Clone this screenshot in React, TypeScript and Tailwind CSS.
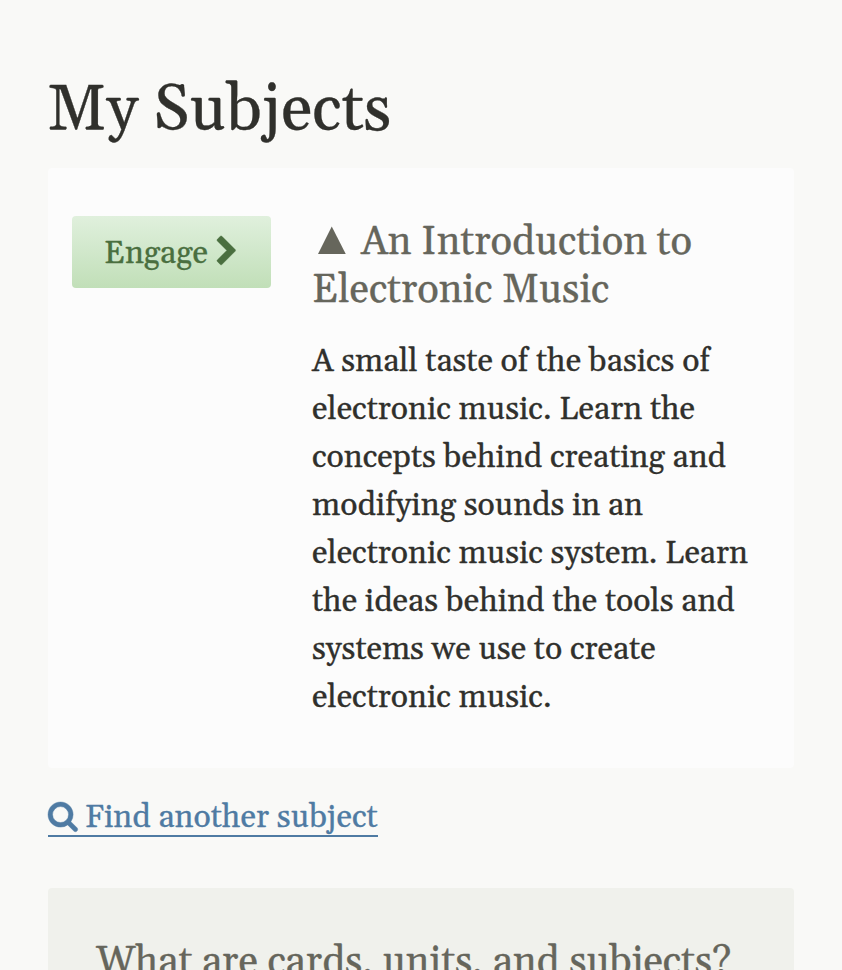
function ChevronIcon() {
  return (
    <svg viewBox="346 26 1036 1612" className="mt-[6px] ml-[9px] h-[28.8px] w-[18.5px] shrink-0 overflow-visible" fill="currentColor" stroke="currentColor" strokeWidth="24" aria-hidden="true">
      <path d="M1363 877l-742 742q-19 19-45 19t-45-19l-166-166q-19-19-19-45t19-45l531-531-531-531q-19-19-19-45t19-45l166-166q19-19 45-19t45 19l742 742q19 19 19 45t-19 45z" />
    </svg>
  );
}

function SearchIcon() {
  return (
    <svg viewBox="64 128 1664 1664" className="mt-[10px] mr-[7px] size-[29.7px] shrink-0 overflow-visible" fill="currentColor" stroke="currentColor" strokeWidth="24" aria-hidden="true">
      <path d="M1216 832q0-185-131.500-316.500t-316.500-131.500-316.500 131.500-131.500 316.500 131.500 316.500 316.500 131.500 316.500-131.500 131.500-316.500zm512 832q0 52-38 90t-90 38q-54 0-90-38l-343-342q-179 124-399 124-143 0-273.500-55.500t-225-150-150-225-55.500-273.500 55.500-273.500 150-225 225-150 273.500-55.500 273.500 55.500 225 150 150 225 55.500 273.500q0 220-124 399l343 343q37 37 37 90z" />
    </svg>
  );
}

function TriangleIcon() {
  return (
    <svg viewBox="0 0 28 28" className="mr-[15px] ml-[6px] inline-block size-7 align-baseline" fill="currentColor" aria-hidden="true">
      <path d="M0 28L13.750 0.500L27.750 28Z" />
    </svg>
  );
}

export default function App() {
  return (
    <main className="h-[970px] w-full overflow-hidden bg-[#f9f9f7] px-12 pt-[75px] font-['Gelasio','Georgia','Liberation_Serif',serif] text-[32px] leading-[48px] text-[#30302c] [-webkit-text-stroke:0.3px_currentColor]">
      <h1 className="-ml-px h-[93px] text-[64px] leading-[72px] tracking-[0.1px]">My Subjects</h1>
      <section className="flex h-[600px] w-[746px] items-start rounded-[4px] bg-[#fcfcfc] px-6 pt-12">
        <a href="#engage" className="flex h-[72px] w-[199px] shrink-0 items-start rounded-[4px] bg-linear-to-b from-[#e0f0dd] to-[#c1dfb8] pt-[14px] pl-8 text-[#4a6f3f]">
          <span>Engage</span>
          <ChevronIcon />
        </a>
        <div className="ml-[41px] w-[450px] pt-[3px]">
          <h2 className="mb-[23px] text-[40px] leading-[48px] text-[#66665c]">
            <TriangleIcon />An Introduction to Electronic Music
          </h2>
          <p>
            A small taste of the basics of electronic music. Learn the concepts behind creating and modifying sounds in an electronic music system. Learn the ideas behind the tools and systems we use to create electronic music.
          </p>
        </div>
      </section>
      <div className="flex h-[120px] items-start pt-6">
        <a href="#search" className="flex h-[45px] w-[330px] items-start border-b-2 border-[#4f7ba3] whitespace-nowrap text-[#4f7ba3]">
          <SearchIcon />
          <span className="mt-[2px] tracking-[0.03px]">Find another subject</span>
        </a>
      </div>
      <section className="h-[200px] w-[746px] rounded-[4px] bg-[#f0f1ec] px-12 pt-[51px]">
        <h2 className="text-[40px] leading-[48px] whitespace-nowrap text-[#66665c]">What are cards, units, and subjects?</h2>
      </section>
    </main>
  );
}
